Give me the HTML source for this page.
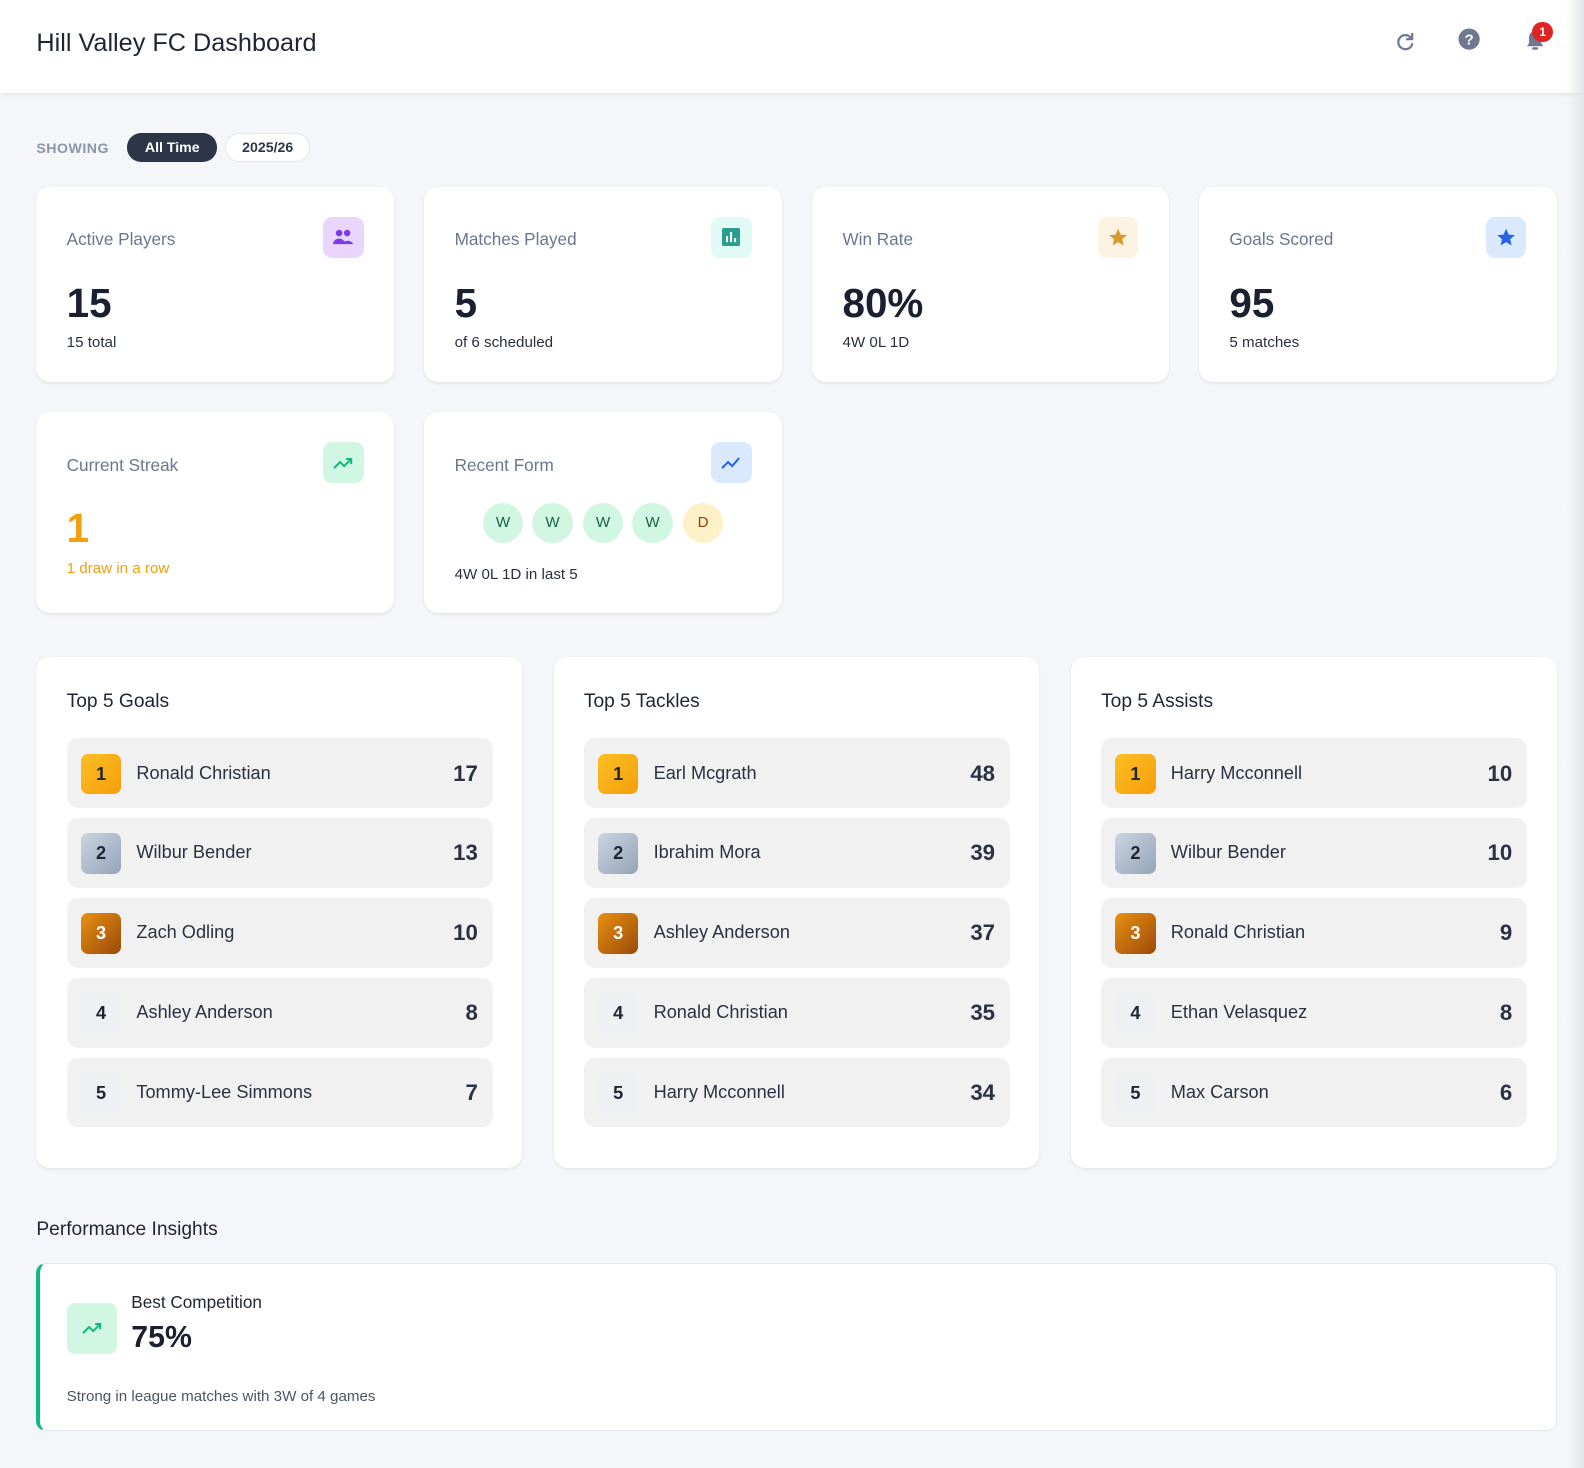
<!DOCTYPE html>
<html><head><meta charset="utf-8"><style>
*{box-sizing:border-box;margin:0;padding:0}
body{width:1584px;height:1468px;background:#f5f6f9;font-family:"Liberation Sans",sans-serif;color:#1f2533;position:relative;overflow:hidden}
#w{position:absolute;left:0;top:0;width:1568px;height:1453px;zoom:1.0102}
.hdr{position:absolute;left:0;top:0;width:1568px;height:92px;background:#fff;box-shadow:0 2px 4px rgba(0,0,0,.07)}
.hdr h1{position:absolute;left:36px;top:29px;font-size:25px;font-weight:400;color:#1f2533}
.sb{position:absolute;right:0;top:0;width:18px;height:1468px;background:linear-gradient(90deg,rgba(230,232,236,0),#e3e5e9)}
.show{position:absolute;left:36px;top:139px;font-size:14px;font-weight:700;color:#8a96a8;letter-spacing:.5px}
.pill{position:absolute;top:132px;height:28px;border-radius:14px;font-size:14px;font-weight:700;line-height:28px;text-align:center}
.card{position:absolute;background:#fff;border-radius:14px;box-shadow:0 1px 3px rgba(0,0,0,.08)}
.lbl{position:absolute;left:30px;top:42px;font-size:17px;color:#6b778c}
.ic{position:absolute;right:30px;top:30px;width:40px;height:40px;border-radius:9px;display:flex;align-items:center;justify-content:center}
.big{position:absolute;left:30px;top:92px;font-size:40px;font-weight:700;color:#1a2030}
.sub{position:absolute;left:30px;top:146px;font-size:15px;color:#2a3040}
.dot{position:absolute;top:90px;width:40px;height:40px;border-radius:50%;background:#d1f7e3;color:#17624a;font-size:15px;text-align:center;line-height:40px}
.lb h2{position:absolute;left:30px;top:34px;font-size:19px;font-weight:400;color:#1f2533}
.row{position:absolute;left:30px;width:422px;height:69px;background:#f1f1f2;border-radius:11px}
.bd{position:absolute;left:14px;top:15px;width:40px;height:40px;border-radius:7px;text-align:center;line-height:40px;font-size:18px;font-weight:700;color:#1f2533}
.nm{position:absolute;left:69px;top:24px;font-size:18px;color:#2a3142}
.vl{position:absolute;right:15px;top:22px;font-size:22px;font-weight:700;color:#2a3142}
.g1{background:linear-gradient(135deg,#fbbf24,#f59e0b)}
.g2{background:linear-gradient(135deg,#cbd5e1,#94a3b8)}
.g3{background:linear-gradient(135deg,#e89012,#9a4a0a);color:#fff!important}
.g0{background:#eef0f3}
</style></head><body>
<div id="w">
<div class="hdr"><h1>Hill Valley FC Dashboard</h1>
<svg style="position:absolute;left:1379px;top:30px" width="24" height="24" viewBox="0 0 24 24"><path d="M18 8A7 7 0 1 0 19 14" fill="none" stroke="#6e7890" stroke-width="2.2" stroke-linecap="round"/><path d="M19 3v6h-6" fill="none" stroke="#6e7890" stroke-width="2.2" stroke-linejoin="round"/></svg>
<svg style="position:absolute;left:1443px;top:28px" width="22" height="22" viewBox="0 0 22 22"><circle cx="11" cy="11" r="10.5" fill="#6e7890"/><text x="11" y="16.5" text-anchor="middle" font-family="Liberation Sans" font-weight="700" font-size="15" fill="#fff">?</text></svg>
<svg style="position:absolute;left:1508px;top:26px" width="24" height="26" viewBox="0 0 24 26"><path d="M4 20h16l-2-3v-6a6 6 0 0 0-12 0v6z" fill="#6e7890"/><rect x="9" y="21" width="6" height="2.5" rx="1.2" fill="#6e7890"/></svg>
<div style="position:absolute;left:1517px;top:22px;width:20px;height:20px;border-radius:50%;background:#e02424;color:#fff;font-size:12px;font-weight:700;text-align:center;line-height:20px">1</div>
</div>
<div class="show">SHOWING</div>
<div class="pill" style="left:126px;width:89px;background:#2d3648;color:#fff">All Time</div>
<div class="pill" style="left:223px;width:84px;background:#fff;border:1px solid #e3e6ec;color:#2d3648;line-height:26px">2025/26</div>

<div class="card" style="left:36px;top:185px;width:354px;height:193px"><div class="lbl">Active Players</div>
<div class="ic" style="background:#ead5fd"><svg width="22" height="16" viewBox="0 0 22 16"><circle cx="7" cy="4" r="3.2" fill="#7c3aed"/><circle cx="15" cy="4" r="3.2" fill="#7c3aed"/><path d="M1 15a6 5.5 0 0 1 12 0z M10 15a6 5.5 0 0 1 11 0z" fill="#7c3aed"/></svg></div>
<div class="big">15</div><div class="sub">15 total</div></div>
<div class="card" style="left:420px;top:185px;width:354px;height:193px"><div class="lbl">Matches Played</div>
<div class="ic" style="background:#e0fbf5"><svg width="18" height="18" viewBox="0 0 18 18"><rect width="18" height="18" rx="2" fill="#2a9d8f"/><rect x="4" y="8" width="2" height="6" fill="#fff"/><rect x="8" y="4" width="2" height="10" fill="#fff"/><rect x="12" y="10" width="2" height="4" fill="#fff"/></svg></div>
<div class="big">5</div><div class="sub">of 6 scheduled</div></div>
<div class="card" style="left:804px;top:185px;width:353px;height:193px"><div class="lbl">Win Rate</div>
<div class="ic" style="background:#fdf3e3"><svg width="20" height="20" viewBox="0 0 24 24"><path d="M12 2l3 7 7.5.6-5.7 5 1.8 7.4L12 18l-6.6 4 1.8-7.4-5.7-5L9 9z" fill="#d89a2a"/></svg></div>
<div class="big">80%</div><div class="sub">4W 0L 1D</div></div>
<div class="card" style="left:1187px;top:185px;width:354px;height:193px"><div class="lbl">Goals Scored</div>
<div class="ic" style="background:#dbe9fe"><svg width="20" height="20" viewBox="0 0 24 24"><path d="M12 2l3 7 7.5.6-5.7 5 1.8 7.4L12 18l-6.6 4 1.8-7.4-5.7-5L9 9z" fill="#2563eb"/></svg></div>
<div class="big">95</div><div class="sub">5 matches</div></div>

<div class="card" style="left:36px;top:408px;width:354px;height:199px"><div class="lbl">Current Streak</div>
<div class="ic" style="background:#d1f7e3"><svg width="20" height="14" viewBox="0 0 20 14"><path d="M1 12l6-6 4 4 7-7M13 3h5v5" fill="none" stroke="#10b981" stroke-width="2"/></svg></div>
<div class="big" style="color:#f59e0b">1</div><div class="sub" style="color:#f59e0b">1 draw in a row</div></div>
<div class="card" style="left:420px;top:408px;width:354px;height:199px"><div class="lbl">Recent Form</div>
<div class="ic" style="background:#dbe9fe"><svg width="20" height="14" viewBox="0 0 20 14"><path d="M1 12l6-6 4 4 7-8" fill="none" stroke="#2563eb" stroke-width="2"/></svg></div>
<div class="dot" style="left:58px">W</div><div class="dot" style="left:107px">W</div><div class="dot" style="left:157px">W</div><div class="dot" style="left:206px">W</div><div class="dot" style="left:256px;background:#fef1c7;color:#92400e">D</div>
<div class="sub" style="top:152px">4W 0L 1D in last 5</div></div>

<div class="card lb" style="left:36px;top:650px;width:481px;height:506px"><h2>Top 5 Goals</h2>
<div class="row" style="top:81px"><div class="bd g1">1</div><div class="nm">Ronald Christian</div><div class="vl">17</div></div>
<div class="row" style="top:160px"><div class="bd g2">2</div><div class="nm">Wilbur Bender</div><div class="vl">13</div></div>
<div class="row" style="top:239px"><div class="bd g3">3</div><div class="nm">Zach Odling</div><div class="vl">10</div></div>
<div class="row" style="top:318px"><div class="bd g0">4</div><div class="nm">Ashley Anderson</div><div class="vl">8</div></div>
<div class="row" style="top:397px"><div class="bd g0">5</div><div class="nm">Tommy-Lee Simmons</div><div class="vl">7</div></div></div>
<div class="card lb" style="left:548px;top:650px;width:481px;height:506px"><h2>Top 5 Tackles</h2>
<div class="row" style="top:81px"><div class="bd g1">1</div><div class="nm">Earl Mcgrath</div><div class="vl">48</div></div>
<div class="row" style="top:160px"><div class="bd g2">2</div><div class="nm">Ibrahim Mora</div><div class="vl">39</div></div>
<div class="row" style="top:239px"><div class="bd g3">3</div><div class="nm">Ashley Anderson</div><div class="vl">37</div></div>
<div class="row" style="top:318px"><div class="bd g0">4</div><div class="nm">Ronald Christian</div><div class="vl">35</div></div>
<div class="row" style="top:397px"><div class="bd g0">5</div><div class="nm">Harry Mcconnell</div><div class="vl">34</div></div></div>
<div class="card lb" style="left:1060px;top:650px;width:481px;height:506px"><h2>Top 5 Assists</h2>
<div class="row" style="top:81px"><div class="bd g1">1</div><div class="nm">Harry Mcconnell</div><div class="vl">10</div></div>
<div class="row" style="top:160px"><div class="bd g2">2</div><div class="nm">Wilbur Bender</div><div class="vl">10</div></div>
<div class="row" style="top:239px"><div class="bd g3">3</div><div class="nm">Ronald Christian</div><div class="vl">9</div></div>
<div class="row" style="top:318px"><div class="bd g0">4</div><div class="nm">Ethan Velasquez</div><div class="vl">8</div></div>
<div class="row" style="top:397px"><div class="bd g0">5</div><div class="nm">Max Carson</div><div class="vl">6</div></div></div>

<div style="position:absolute;left:36px;top:1207px;font-size:19px;color:#1f2533">Performance Insights</div>
<div style="position:absolute;left:36px;top:1250px;width:1505px;height:167px;background:#fff;border:1px solid #e3e6ec;border-left:4px solid #10b981;border-radius:10px">
<div style="position:absolute;left:26px;top:39px;width:50px;height:50px;border-radius:8px;background:#d1f7e3;display:flex;align-items:center;justify-content:center"><svg width="22" height="14" viewBox="0 0 20 14"><path d="M1 12l6-6 4 4 7-7M13 3h5v5" fill="none" stroke="#10b981" stroke-width="2"/></svg></div>
<div style="position:absolute;left:90px;top:28px;font-size:17px;color:#1f2533">Best Competition</div>
<div style="position:absolute;left:90px;top:57px;font-size:30px;font-weight:700;color:#1a2030">75%</div>
<div style="position:absolute;left:26px;top:123px;font-size:15px;color:#4b5565">Strong in league matches with 3W of 4 games</div></div>
</div>
<div class="sb"></div>
</body></html>
